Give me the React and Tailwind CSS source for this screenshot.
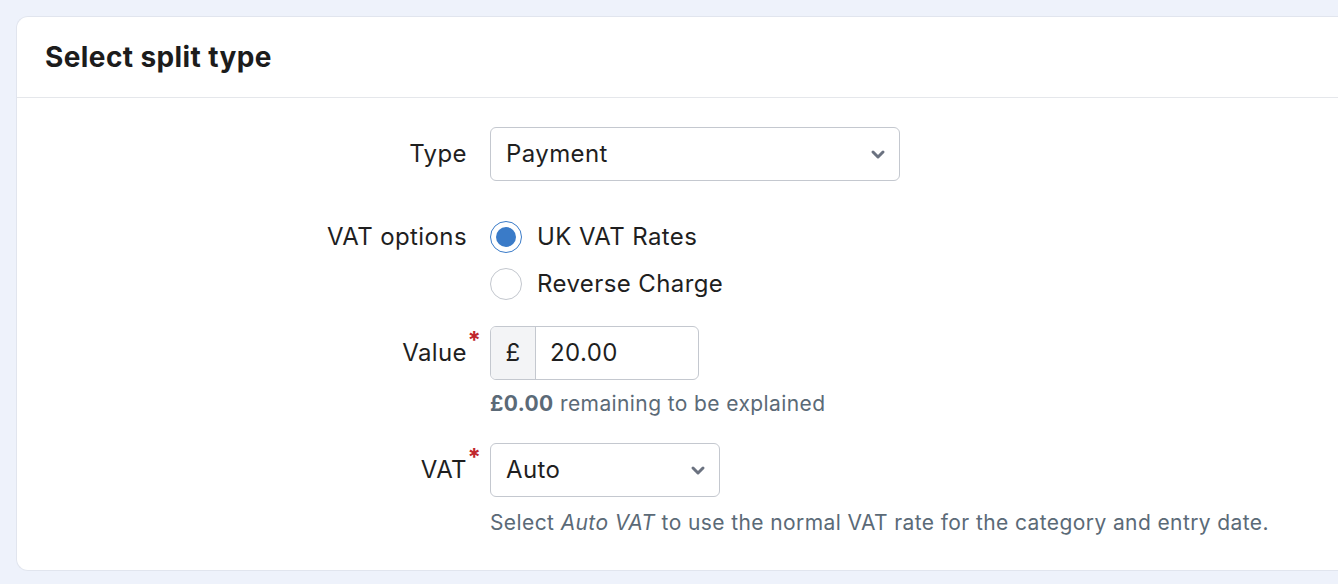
const Chevron = () => (
  <svg width="18" height="18" viewBox="0 0 18 18" fill="none" className="text-[#6b7280]">
    <path d="M4 7l5 5 5-5" stroke="currentColor" strokeWidth="3" strokeLinecap="round" strokeLinejoin="round" />
  </svg>
);

const Radio = ({ checked, label }) => (
  <label className="flex items-center gap-[15px] h-[32px]">
    <span
      className={
        checked
          ? "w-[32px] h-[32px] rounded-full border border-[#3a7bc8] flex items-center justify-center"
          : "w-[32px] h-[32px] rounded-full border border-[#c3c7ce]"
      }
    >
      {checked && <span className="w-[20px] h-[20px] rounded-full bg-[#3a7bc8]" />}
    </span>
    <span>{label}</span>
  </label>
);

const Label = ({ children, required }) => (
  <div className="w-[473px] shrink-0 flex justify-end pr-[23px]">
    <span className="relative">
      {children}
      {required && (
        <span className="absolute -right-[14px] -top-[6px] text-[#c0262d] text-[24px] font-bold leading-none tracking-normal">*</span>
      )}
    </span>
  </div>
);

export default function App() {
  return (
    <div
      className="min-h-screen w-full overflow-hidden bg-[#eef2fb] pt-4 pl-4 text-[24px] tracking-[0.4px] text-[#1f1f1f]"
      style={{ fontFamily: "Inter, 'Noto Sans', sans-serif" }}
    >
      <div className="w-[1340px] bg-white rounded-l-[12px] border border-[#e1e5ee] border-r-0">
        {/* Header */}
        <div className="h-[81px] flex items-center px-[28px] border-b border-[#e5e7eb]">
          <h2 className="text-[28px] font-bold text-[#1c1c1c] tracking-[0.4px]">Select split type</h2>
        </div>

        {/* Body */}
        <div className="pt-[29px] pb-[33px]">
          {/* Type */}
          <div className="flex items-center">
            <Label>Type</Label>
            <div className="w-[410px] h-[54px] border border-[#c4c8cf] rounded-[6px] flex items-center justify-between pl-[15px] pr-[12px]">
              <span>Payment</span>
              <Chevron />
            </div>
          </div>

          {/* VAT options */}
          <div className="flex mt-[40px]">
            <div className="h-[32px] flex items-center">
              <Label>VAT options</Label>
            </div>
            <div className="flex flex-col gap-[15px]">
              <Radio checked label="UK VAT Rates" />
              <Radio label="Reverse Charge" />
            </div>
          </div>

          {/* Value */}
          <div className="flex items-center mt-[26px]">
            <Label required>Value</Label>
            <div className="flex w-[209px] h-[54px] border border-[#c4c8cf] rounded-[6px] overflow-hidden">
              <div className="w-[45px] bg-[#f3f4f6] border-r border-[#c4c8cf] flex items-center justify-center">£</div>
              <div className="flex-1 flex items-center pl-[14px]">20.00</div>
            </div>
          </div>
          <div className="pl-[473px] mt-[10px] text-[21px] leading-[28px] text-[#5b6a77]">
            <span className="font-bold">£0.00</span> remaining to be explained
          </div>

          {/* VAT */}
          <div className="flex items-center mt-[25px]">
            <Label required>VAT</Label>
            <div className="w-[230px] h-[54px] border border-[#c4c8cf] rounded-[6px] flex items-center justify-between pl-[15px] pr-[12px]">
              <span>Auto</span>
              <Chevron />
            </div>
          </div>
          <div className="pl-[473px] mt-[12px] text-[21px] leading-[28px] text-[#5b6a77]">
            Select <em>Auto VAT</em> to use the normal VAT rate for the category and entry date.
          </div>
        </div>
      </div>
    </div>
  );
}
